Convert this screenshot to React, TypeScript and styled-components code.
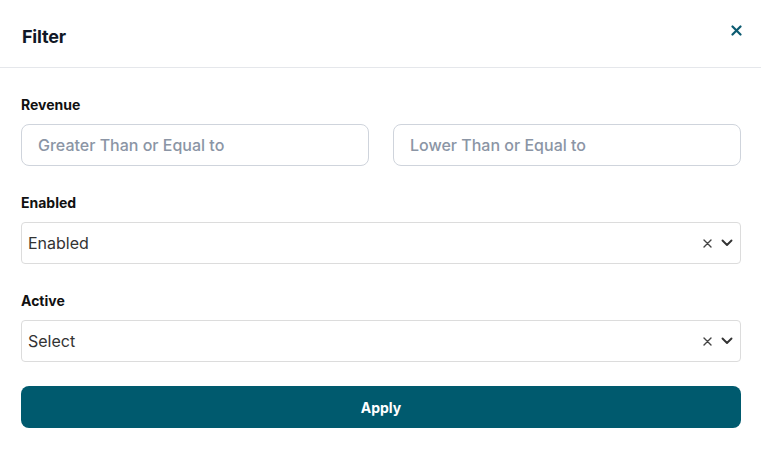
import React from "react";
import styled, { createGlobalStyle } from "styled-components";

const Global = createGlobalStyle`
  html, body { margin: 0; padding: 0; background: #fff; }
  body { font-family: Inter, "Noto Sans", sans-serif; }
  * { box-sizing: border-box; }
`;

const Dialog = styled.div`
  width: 761px;
  background: #fff;
`;

const Header = styled.div`
  height: 68px;
  display: flex;
  align-items: center;
  justify-content: space-between;
  padding: 6px 19px 0 22px;
  border-bottom: 1px solid #e5e7eb;
`;

const Title = styled.h2`
  margin: 0;
  font-size: 18px;
  font-weight: 700;
  color: #111827;
  letter-spacing: -0.2px;
`;

const CloseButton = styled.button`
  border: 0;
  background: none;
  padding: 0;
  margin-top: -13px;
  width: 12px;
  height: 12px;
  display: flex;
  align-items: center;
  justify-content: center;
  cursor: pointer;
  color: #0b5a70;
`;

const Body = styled.div`
  display: flex;
  flex-direction: column;
  padding: 26px 20px 0 21px;
`;

const Field = styled.div`
  display: flex;
  flex-direction: column;
  gap: 9px;
  margin-bottom: 26px;
`;

const Label = styled.label`
  font-size: 14px;
  line-height: 20px;
  font-weight: 700;
  color: #111;
  padding-top: 1px;
`;

const Row = styled.div`
  display: grid;
  grid-template-columns: 1fr 1fr;
  gap: 24px;
`;

const TextInput = styled.input`
  height: 42px;
  width: 100%;
  border: 1px solid #cfd4dc;
  border-radius: 8px;
  padding: 0 16px;
  font-family: Inter, sans-serif;
  font-size: 16px;
  font-weight: 500;
  color: #111;
  outline: none;
  &::placeholder { color: #8b95a5; }
`;

const Select = styled.div`
  height: 42px;
  border: 1px solid #dcdcdc;
  border-radius: 4px;
  display: flex;
  align-items: center;
  padding: 0 3px 0 6px;
`;

const SelectValue = styled.span`
  flex: 1;
  font-size: 16px;
  color: #333;
`;

const Indicator = styled.span`
  display: flex;
  align-items: center;
  justify-content: center;
  width: 20px;
  color: #333;
`;

const ApplyButton = styled.button`
  margin-top: -2px;
  height: 42px;
  border: 0;
  border-radius: 8px;
  background: #005a6e;
  color: #fff;
  font-family: Inter, sans-serif;
  font-size: 14px;
  font-weight: 700;
  cursor: pointer;
`;

const ClearIcon = () => (
  <svg width="9" height="9" viewBox="0 0 9 9">
    <path d="M1 1L8 8M8 1L1 8" stroke="#444" strokeWidth="1.4" strokeLinecap="round" />
  </svg>
);

const Chevron = () => (
  <svg width="12" height="8" viewBox="0 0 12 8">
    <path d="M1.5 1.5L6 6L10.5 1.5" fill="none" stroke="#333" strokeWidth="1.9" strokeLinecap="round" strokeLinejoin="round" />
  </svg>
);

const SelectBox = ({ value }: { value: string }) => (
  <Select>
    <SelectValue>{value}</SelectValue>
    <Indicator><ClearIcon /></Indicator>
    <Indicator><Chevron /></Indicator>
  </Select>
);

export default function App() {
  return (
    <Dialog>
      <Global />
      <Header>
        <Title>Filter</Title>
        <CloseButton aria-label="Close">
          <svg width="11" height="11" viewBox="0 0 11 11">
            <path d="M1.5 1.5L9.5 9.5M9.5 1.5L1.5 9.5" stroke="currentColor" strokeWidth="2.2" strokeLinecap="round" />
          </svg>
        </CloseButton>
      </Header>
      <Body>
        <Field>
          <Label>Revenue</Label>
          <Row>
            <TextInput placeholder="Greater Than or Equal to" />
            <TextInput placeholder="Lower Than or Equal to" />
          </Row>
        </Field>
        <Field>
          <Label>Enabled</Label>
          <SelectBox value="Enabled" />
        </Field>
        <Field>
          <Label>Active</Label>
          <SelectBox value="Select" />
        </Field>
        <ApplyButton>Apply</ApplyButton>
      </Body>
    </Dialog>
  );
}
